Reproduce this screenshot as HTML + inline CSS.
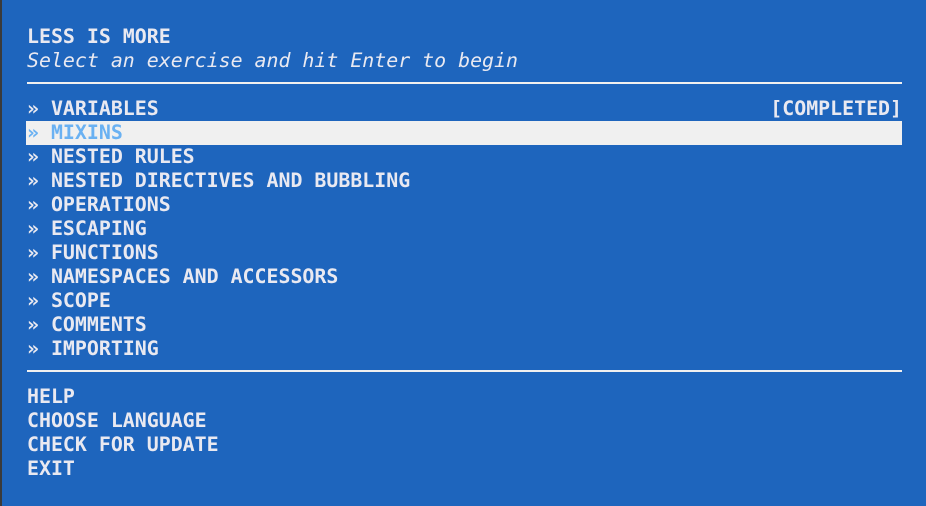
<!DOCTYPE html>
<html><head><style>
html,body{margin:0;padding:0}
body{width:926px;height:506px;background:#1e65bd;overflow:hidden;position:relative;font-family:"DejaVu Sans Mono","Liberation Mono",monospace;font-size:19.9px;font-weight:bold;color:#e9e9f1}
.b{position:absolute;left:0;top:0;width:2px;height:506px;background:#3a3a3a}
.w{position:absolute;left:27px;top:25px;width:875px}
.l{height:24px;line-height:24px;white-space:pre;position:relative}
.i{font-style:italic;font-weight:normal}
.r{height:24px;position:relative}
.r:after{content:"";position:absolute;left:0;right:0;top:9px;height:2px;background:#f0f0f0}
.s{background:#f0f0f0;color:#6ab1f2;margin-left:-1px;padding-left:1px}
.c{position:absolute;right:0;top:0}
</style></head><body><div class="b"></div>
<div class="w">
<div class="l">LESS IS MORE</div>
<div class="l i">Select an exercise and hit Enter to begin</div>
<div class="r"></div>
<div class="l">» VARIABLES<span class="c">[COMPLETED]</span></div>
<div class="l s">» MIXINS</div>
<div class="l">» NESTED RULES</div>
<div class="l">» NESTED DIRECTIVES AND BUBBLING</div>
<div class="l">» OPERATIONS</div>
<div class="l">» ESCAPING</div>
<div class="l">» FUNCTIONS</div>
<div class="l">» NAMESPACES AND ACCESSORS</div>
<div class="l">» SCOPE</div>
<div class="l">» COMMENTS</div>
<div class="l">» IMPORTING</div>
<div class="r"></div>
<div class="l">HELP</div>
<div class="l">CHOOSE LANGUAGE</div>
<div class="l">CHECK FOR UPDATE</div>
<div class="l">EXIT</div>
</div>
</body></html>
